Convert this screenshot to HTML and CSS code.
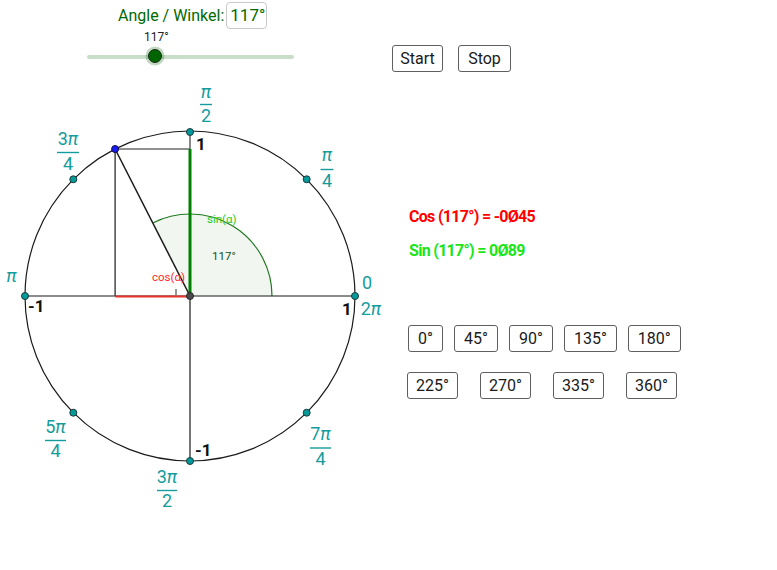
FILE: index.html
```html
<!DOCTYPE html>
<html>
<head>
<meta charset="utf-8">
<link rel="stylesheet" href="styles.css">
</head>
<body>
<div class="applet">
  <svg class="graph" width="777" height="570" viewBox="0 0 777 570">
    <path class="sector" d="M190,296 L272,296 A82,82 0 0 0 152.77,222.94 Z"/>
    <path class="sector-arc" d="M272,296 A82,82 0 0 0 152.77,222.94"/>
    <circle class="unit" cx="190" cy="296" r="165"/>
    <line class="axis" x1="25" y1="296" x2="355" y2="296"/>
    <line class="axis" x1="190" y1="296" x2="190" y2="461"/>
    <line class="grey" x1="190" y1="132" x2="190" y2="149"/>
    <line class="grey" x1="115.1" y1="149" x2="190" y2="149"/>
    <line class="axis" x1="115.1" y1="149" x2="115.1" y2="296"/>
    <line class="sinline" x1="190" y1="149" x2="190" y2="296"/>
    <line class="cosline" x1="115.1" y1="296.5" x2="190" y2="296.5"/>
    <line class="radius" x1="115.1" y1="149" x2="190" y2="296"/>
    <line class="tick" x1="176" y1="289" x2="176" y2="295"/>

    <text class="small sinlabel" x="207" y="223">sin(α)</text>
    <text class="small anglabel" x="212" y="260">117°</text>
    <text class="small coslabel" x="152" y="281">cos(α)</text>

    <circle class="dot" cx="355" cy="296" r="3.5"/>
    <circle class="dot" cx="306.7" cy="179.3" r="3.5"/>
    <circle class="dot" cx="190" cy="132" r="3.5"/>
    <circle class="dot" cx="73.3" cy="179.3" r="3.5"/>
    <circle class="dot" cx="25" cy="296" r="3.5"/>
    <circle class="dot" cx="73.3" cy="412.7" r="3.5"/>
    <circle class="dot" cx="190" cy="461" r="3.5"/>
    <circle class="dot" cx="306.7" cy="412.7" r="3.5"/>
    <circle class="pdot" cx="115.1" cy="149" r="3.5"/>
    <circle class="cdot" cx="190" cy="296" r="3.5"/>

    <text class="num" x="196" y="150">1</text>
    <text class="num" x="28" y="312">-1</text>
    <text class="num" x="342" y="315">1</text>
    <text class="num" x="195" y="456">-1</text>

    <g class="teal">
      <text x="206" y="98"><tspan class="pi">π</tspan></text>
      <line x1="200" y1="104.5" x2="212" y2="104.5"/>
      <text x="206" y="122">2</text>

      <text x="68" y="145">3<tspan class="pi">π</tspan></text>
      <line x1="57" y1="152.5" x2="79" y2="152.5"/>
      <text x="68" y="170">4</text>

      <text x="327" y="161"><tspan class="pi">π</tspan></text>
      <line x1="320.5" y1="169.5" x2="333.5" y2="169.5"/>
      <text x="327" y="187">4</text>

      <text x="11.5" y="282"><tspan class="pi">π</tspan></text>
      <text x="367" y="289">0</text>
      <text x="371" y="315">2<tspan class="pi">π</tspan></text>

      <text x="55.5" y="433">5<tspan class="pi">π</tspan></text>
      <line x1="45" y1="440.5" x2="66" y2="440.5"/>
      <text x="55.5" y="457">4</text>

      <text x="320.5" y="440">7<tspan class="pi">π</tspan></text>
      <line x1="310" y1="448" x2="331" y2="448"/>
      <text x="320.5" y="465">4</text>

      <text x="167" y="483">3<tspan class="pi">π</tspan></text>
      <line x1="157" y1="490.5" x2="177" y2="490.5"/>
      <text x="167" y="507">2</text>
    </g>
  </svg>

  <div class="angle-input">
    <span class="angle-label">Angle / Winkel:</span>
    <span class="angle-box">117°</span>
  </div>

  <div class="slider">
    <span class="slider-value">117°</span>
    <div class="track"></div>
    <div class="knob"></div>
  </div>

  <div class="anim-buttons">
    <button class="btn">Start</button>
    <button class="btn">Stop</button>
  </div>

  <div class="results">
    <div class="cos">Cos (117°) = -0Ø45</div>
    <div class="sin">Sin (117°) = 0Ø89</div>
  </div>

  <div class="presets">
    <div class="row row1">
      <button class="btn">0°</button>
      <button class="btn">45°</button>
      <button class="btn">90°</button>
      <button class="btn">135°</button>
      <button class="btn">180°</button>
    </div>
    <div class="row row2">
      <button class="btn">225°</button>
      <button class="btn">270°</button>
      <button class="btn">335°</button>
      <button class="btn">360°</button>
    </div>
  </div>
</div>
</body>
</html>
```

FILE: styles.css
```css
html, body {
  margin: 0;
  padding: 0;
  background: #ffffff;
}

body {
  font-family: Roboto, "Liberation Sans", sans-serif;
}

.applet {
  position: relative;
  width: 777px;
  height: 570px;
  overflow: hidden;
  background: #ffffff;
}

.graph {
  position: absolute;
  left: 0;
  top: 0;
  font-family: Roboto, "Liberation Sans", sans-serif;
}

.sector {
  fill: #f1f6f1;
  stroke: none;
}

.sector-arc {
  fill: none;
  stroke: #1f7a1f;
  stroke-width: 1.2;
}

.unit {
  fill: none;
  stroke: #1a1a1a;
  stroke-width: 1.2;
}

.axis {
  stroke: #1a1a1a;
  stroke-width: 1.2;
}

.grey {
  stroke: #6b6b6b;
  stroke-width: 1.6;
}

.sinline {
  stroke: #008000;
  stroke-width: 3;
}

.cosline {
  stroke: #e8332b;
  stroke-width: 2;
}

.radius {
  stroke: #1a1a1a;
  stroke-width: 1.5;
}

.tick {
  stroke: #333333;
  stroke-width: 1;
}

.small {
  font-size: 11.5px;
}

.sinlabel { fill: #22cc22; }
.anglabel { fill: #105010; }
.coslabel { fill: #ff2a2a; }

.dot {
  fill: #009a9a;
  stroke: #1e3a3a;
  stroke-width: 1;
}

.pdot {
  fill: #1a1aff;
  stroke: #101040;
  stroke-width: 1;
}

.cdot {
  fill: #4a4a4a;
  stroke: #2a2a2a;
  stroke-width: 1;
}

.num {
  font-size: 17px;
  font-weight: bold;
  fill: #111111;
}

.teal text {
  font-size: 18px;
  fill: #149c9c;
  text-anchor: middle;
}

.teal .pi {
  font-style: italic;
}

.teal line {
  stroke: #149c9c;
  stroke-width: 1.4;
}

.angle-input {
  position: absolute;
  left: 118px;
  top: 1px;
  display: flex;
  align-items: center;
  gap: 2px;
  height: 28px;
}

.angle-label {
  color: #006a00;
  font-size: 16px;
}

.angle-box {
  box-sizing: border-box;
  height: 27px;
  width: 41px;
  border: 1px solid #c8c8c8;
  border-radius: 4px;
  color: #006a00;
  font-size: 17px;
  line-height: 25px;
  padding-left: 3px;
}

.slider {
  position: absolute;
  left: 87px;
  top: 30px;
  width: 207px;
  height: 36px;
}

.slider-value {
  position: absolute;
  left: 57px;
  top: 0;
  font-size: 12px;
  color: #222222;
}

.track {
  position: absolute;
  left: 0;
  right: 0;
  top: 25px;
  height: 4px;
  border-radius: 2px;
  background: #c9dec9;
}

.knob {
  position: absolute;
  left: 61px;
  top: 19px;
  width: 12px;
  height: 12px;
  border-radius: 50%;
  background: #006400;
  border: 1px solid #1a2a1a;
  box-shadow: 0 0 0 2.5px rgba(0, 100, 0, 0.25);
}

.btn {
  box-sizing: border-box;
  height: 27px;
  padding: 0 9px;
  border: 1.5px solid #5e5e5e;
  border-radius: 3px;
  background: #ffffff;
  color: #1a1a1a;
  font-family: Roboto, "Liberation Sans", sans-serif;
  font-size: 16px;
  line-height: 24px;
  margin: 0;
}

.anim-buttons {
  position: absolute;
  left: 392px;
  top: 45px;
  display: flex;
  gap: 15px;
}

.anim-buttons .btn {
  width: 51px;
  padding: 0;
}

.anim-buttons .btn + .btn {
  width: 53px;
}

.results {
  position: absolute;
  left: 409px;
  top: 207px;
  display: flex;
  flex-direction: column;
  gap: 14px;
  font-size: 16px;
  font-weight: bold;
  line-height: 20px;
  letter-spacing: -0.7px;
}

.cos { color: #ff0000; }
.sin { color: #19e619; }

.presets {
  position: absolute;
  left: 407px;
  top: 325px;
  display: flex;
  flex-direction: column;
  gap: 20px;
}

.row {
  display: flex;
}

.row1 {
  gap: 11px;
  padding-left: 1px;
}

.row2 {
  gap: 22px;
}

.row2 .btn {
  width: 51px;
  padding: 0;
}
```
